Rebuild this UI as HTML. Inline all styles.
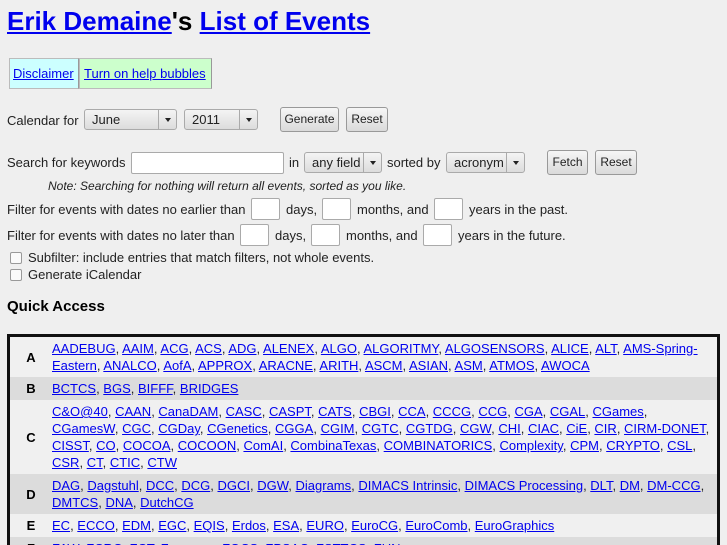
<!DOCTYPE html>
<html><head><meta charset="utf-8"><style>
html{overflow:hidden;height:545px}
body{margin:0;background:#efefef;font-family:"Liberation Sans",Arial,sans-serif;font-size:13px;color:#222;width:727px;height:545px;overflow:hidden;position:relative}
a{color:#00e}
.abs{position:absolute;white-space:nowrap}
h1{position:absolute;left:7px;top:6px;margin:0;font-size:26px;font-weight:bold;color:#000}
.sel{display:inline-block;position:absolute;height:21px;border:1px solid #aaa;border-radius:3px;background:linear-gradient(#f4f4f4,#dcdcdc);box-sizing:border-box;line-height:19px;padding-left:7px}
.sel:after{content:"";position:absolute;right:0;top:0;bottom:0;width:17px;border-left:1px solid #aaa}
.sel i{position:absolute;right:5px;top:8px;border:3.5px solid transparent;border-top:4px solid #222;border-bottom:0}
.btn{position:absolute;height:25px;border:1px solid #999;border-radius:3px;background:linear-gradient(#f6f6f6,#dadada);box-sizing:border-box;line-height:23px;text-align:center;font-size:12px}
.inp{position:absolute;background:#fff;border:1px solid #aaa;border-radius:2px;box-sizing:border-box}
.cb{position:absolute;width:10px;height:10px;border:1px solid #999;background:#fafafa;border-radius:2px}
table{position:absolute;left:7px;top:334px;width:713px;border:3px solid #111;border-collapse:collapse;background:#f0f0f0}
td{padding:3px 0 3px 0;line-height:17px;vertical-align:middle}
td.l{width:42px;text-align:center;font-weight:bold;color:#000;padding-left:0}
tr.g{background:#dcdcdc}
</style></head><body>
<h1><a href="#">Erik Demaine</a>'s <a href="#">List of Events</a></h1>
<div class="abs" style="left:9px;top:58px;width:68px;height:29px;background:#cff;border:1px solid #bbb;border-right:1px solid #999"></div>
<div class="abs" style="left:79px;top:58px;width:131px;height:29px;background:#cfc;border:1px solid #bbb;border-right:1px solid #999"></div>
<div class="abs" style="left:13px;top:66px"><a href="#">Disclaimer</a></div>
<div class="abs" style="left:84px;top:66px"><a href="#">Turn on help bubbles</a></div>

<div class="abs" style="left:7px;top:113px">Calendar for</div>
<div class="sel" style="left:84px;top:109px;width:93px">June<i></i></div>
<div class="sel" style="left:184px;top:109px;width:74px">2011<i></i></div>
<div class="btn" style="left:280px;top:107px;width:59px">Generate</div>
<div class="btn" style="left:346px;top:107px;width:42px">Reset</div>

<div class="abs" style="left:7px;top:155px">Search for keywords</div>
<div class="inp" style="left:131px;top:152px;width:153px;height:22px"></div>
<div class="abs" style="left:289px;top:155px">in</div>
<div class="sel" style="left:304px;top:152px;width:78px">any field<i></i></div>
<div class="abs" style="left:387px;top:155px">sorted by</div>
<div class="sel" style="left:446px;top:152px;width:79px">acronym<i></i></div>
<div class="btn" style="left:547px;top:150px;width:41px">Fetch</div>
<div class="btn" style="left:595px;top:150px;width:42px">Reset</div>
<div class="abs" style="left:48px;top:179px;font-style:italic;font-size:12px">Note: Searching for nothing will return all events, sorted as you like.</div>

<div class="abs" style="left:7px;top:202px">Filter for events with dates no earlier than</div>
<div class="inp" style="left:251px;top:198px;width:29px;height:22px"></div>
<div class="abs" style="left:286px;top:202px">days,</div>
<div class="inp" style="left:322px;top:198px;width:29px;height:22px"></div>
<div class="abs" style="left:357px;top:202px">months, and</div>
<div class="inp" style="left:434px;top:198px;width:29px;height:22px"></div>
<div class="abs" style="left:469px;top:202px">years in the past.</div>

<div class="abs" style="left:7px;top:228px">Filter for events with dates no later than</div>
<div class="inp" style="left:240px;top:224px;width:29px;height:22px"></div>
<div class="abs" style="left:275px;top:228px">days,</div>
<div class="inp" style="left:311px;top:224px;width:29px;height:22px"></div>
<div class="abs" style="left:346px;top:228px">months, and</div>
<div class="inp" style="left:423px;top:224px;width:29px;height:22px"></div>
<div class="abs" style="left:458px;top:228px">years in the future.</div>

<div class="cb" style="left:10px;top:252px"></div>
<div class="abs" style="left:28px;top:250px">Subfilter: include entries that match filters, not whole events.</div>
<div class="cb" style="left:10px;top:269px"></div>
<div class="abs" style="left:28px;top:267px">Generate iCalendar</div>

<div class="abs" style="left:7px;top:298px;font-weight:bold;font-size:15px;color:#000">Quick Access</div>

<table>
<tr><td class="l">A</td><td><a href="#">AADEBUG</a>, <a href="#">AAIM</a>, <a href="#">ACG</a>, <a href="#">ACS</a>, <a href="#">ADG</a>, <a href="#">ALENEX</a>, <a href="#">ALGO</a>, <a href="#">ALGORITMY</a>, <a href="#">ALGOSENSORS</a>, <a href="#">ALICE</a>, <a href="#">ALT</a>, <a href="#">AMS-Spring-<br>Eastern</a>, <a href="#">ANALCO</a>, <a href="#">AofA</a>, <a href="#">APPROX</a>, <a href="#">ARACNE</a>, <a href="#">ARITH</a>, <a href="#">ASCM</a>, <a href="#">ASIAN</a>, <a href="#">ASM</a>, <a href="#">ATMOS</a>, <a href="#">AWOCA</a></td></tr>
<tr class="g"><td class="l">B</td><td><a href="#">BCTCS</a>, <a href="#">BGS</a>, <a href="#">BIFFF</a>, <a href="#">BRIDGES</a></td></tr>
<tr><td class="l">C</td><td><a href="#">C&amp;O@40</a>, <a href="#">CAAN</a>, <a href="#">CanaDAM</a>, <a href="#">CASC</a>, <a href="#">CASPT</a>, <a href="#">CATS</a>, <a href="#">CBGI</a>, <a href="#">CCA</a>, <a href="#">CCCG</a>, <a href="#">CCG</a>, <a href="#">CGA</a>, <a href="#">CGAL</a>, <a href="#">CGames</a>,<br><a href="#">CGamesW</a>, <a href="#">CGC</a>, <a href="#">CGDay</a>, <a href="#">CGenetics</a>, <a href="#">CGGA</a>, <a href="#">CGIM</a>, <a href="#">CGTC</a>, <a href="#">CGTDG</a>, <a href="#">CGW</a>, <a href="#">CHI</a>, <a href="#">CIAC</a>, <a href="#">CiE</a>, <a href="#">CIR</a>, <a href="#">CIRM-DONET</a>,<br><a href="#">CISST</a>, <a href="#">CO</a>, <a href="#">COCOA</a>, <a href="#">COCOON</a>, <a href="#">ComAI</a>, <a href="#">CombinaTexas</a>, <a href="#">COMBINATORICS</a>, <a href="#">Complexity</a>, <a href="#">CPM</a>, <a href="#">CRYPTO</a>, <a href="#">CSL</a>,<br><a href="#">CSR</a>, <a href="#">CT</a>, <a href="#">CTIC</a>, <a href="#">CTW</a></td></tr>
<tr class="g"><td class="l">D</td><td><a href="#">DAG</a>, <a href="#">Dagstuhl</a>, <a href="#">DCC</a>, <a href="#">DCG</a>, <a href="#">DGCI</a>, <a href="#">DGW</a>, <a href="#">Diagrams</a>, <a href="#">DIMACS Intrinsic</a>, <a href="#">DIMACS Processing</a>, <a href="#">DLT</a>, <a href="#">DM</a>, <a href="#">DM-CCG</a>,<br><a href="#">DMTCS</a>, <a href="#">DNA</a>, <a href="#">DutchCG</a></td></tr>
<tr><td class="l">E</td><td><a href="#">EC</a>, <a href="#">ECCO</a>, <a href="#">EDM</a>, <a href="#">EGC</a>, <a href="#">EQIS</a>, <a href="#">Erdos</a>, <a href="#">ESA</a>, <a href="#">EURO</a>, <a href="#">EuroCG</a>, <a href="#">EuroComb</a>, <a href="#">EuroGraphics</a></td></tr>
<tr class="g"><td class="l">F</td><td><a href="#">FAW</a>, <a href="#">FCRC</a>, <a href="#">FCT</a>, <a href="#">Feynman</a>, <a href="#">FOCS</a>, <a href="#">FPSAC</a>, <a href="#">FSTTCS</a>, <a href="#">FUN</a></td></tr>
</table>
</body></html>
